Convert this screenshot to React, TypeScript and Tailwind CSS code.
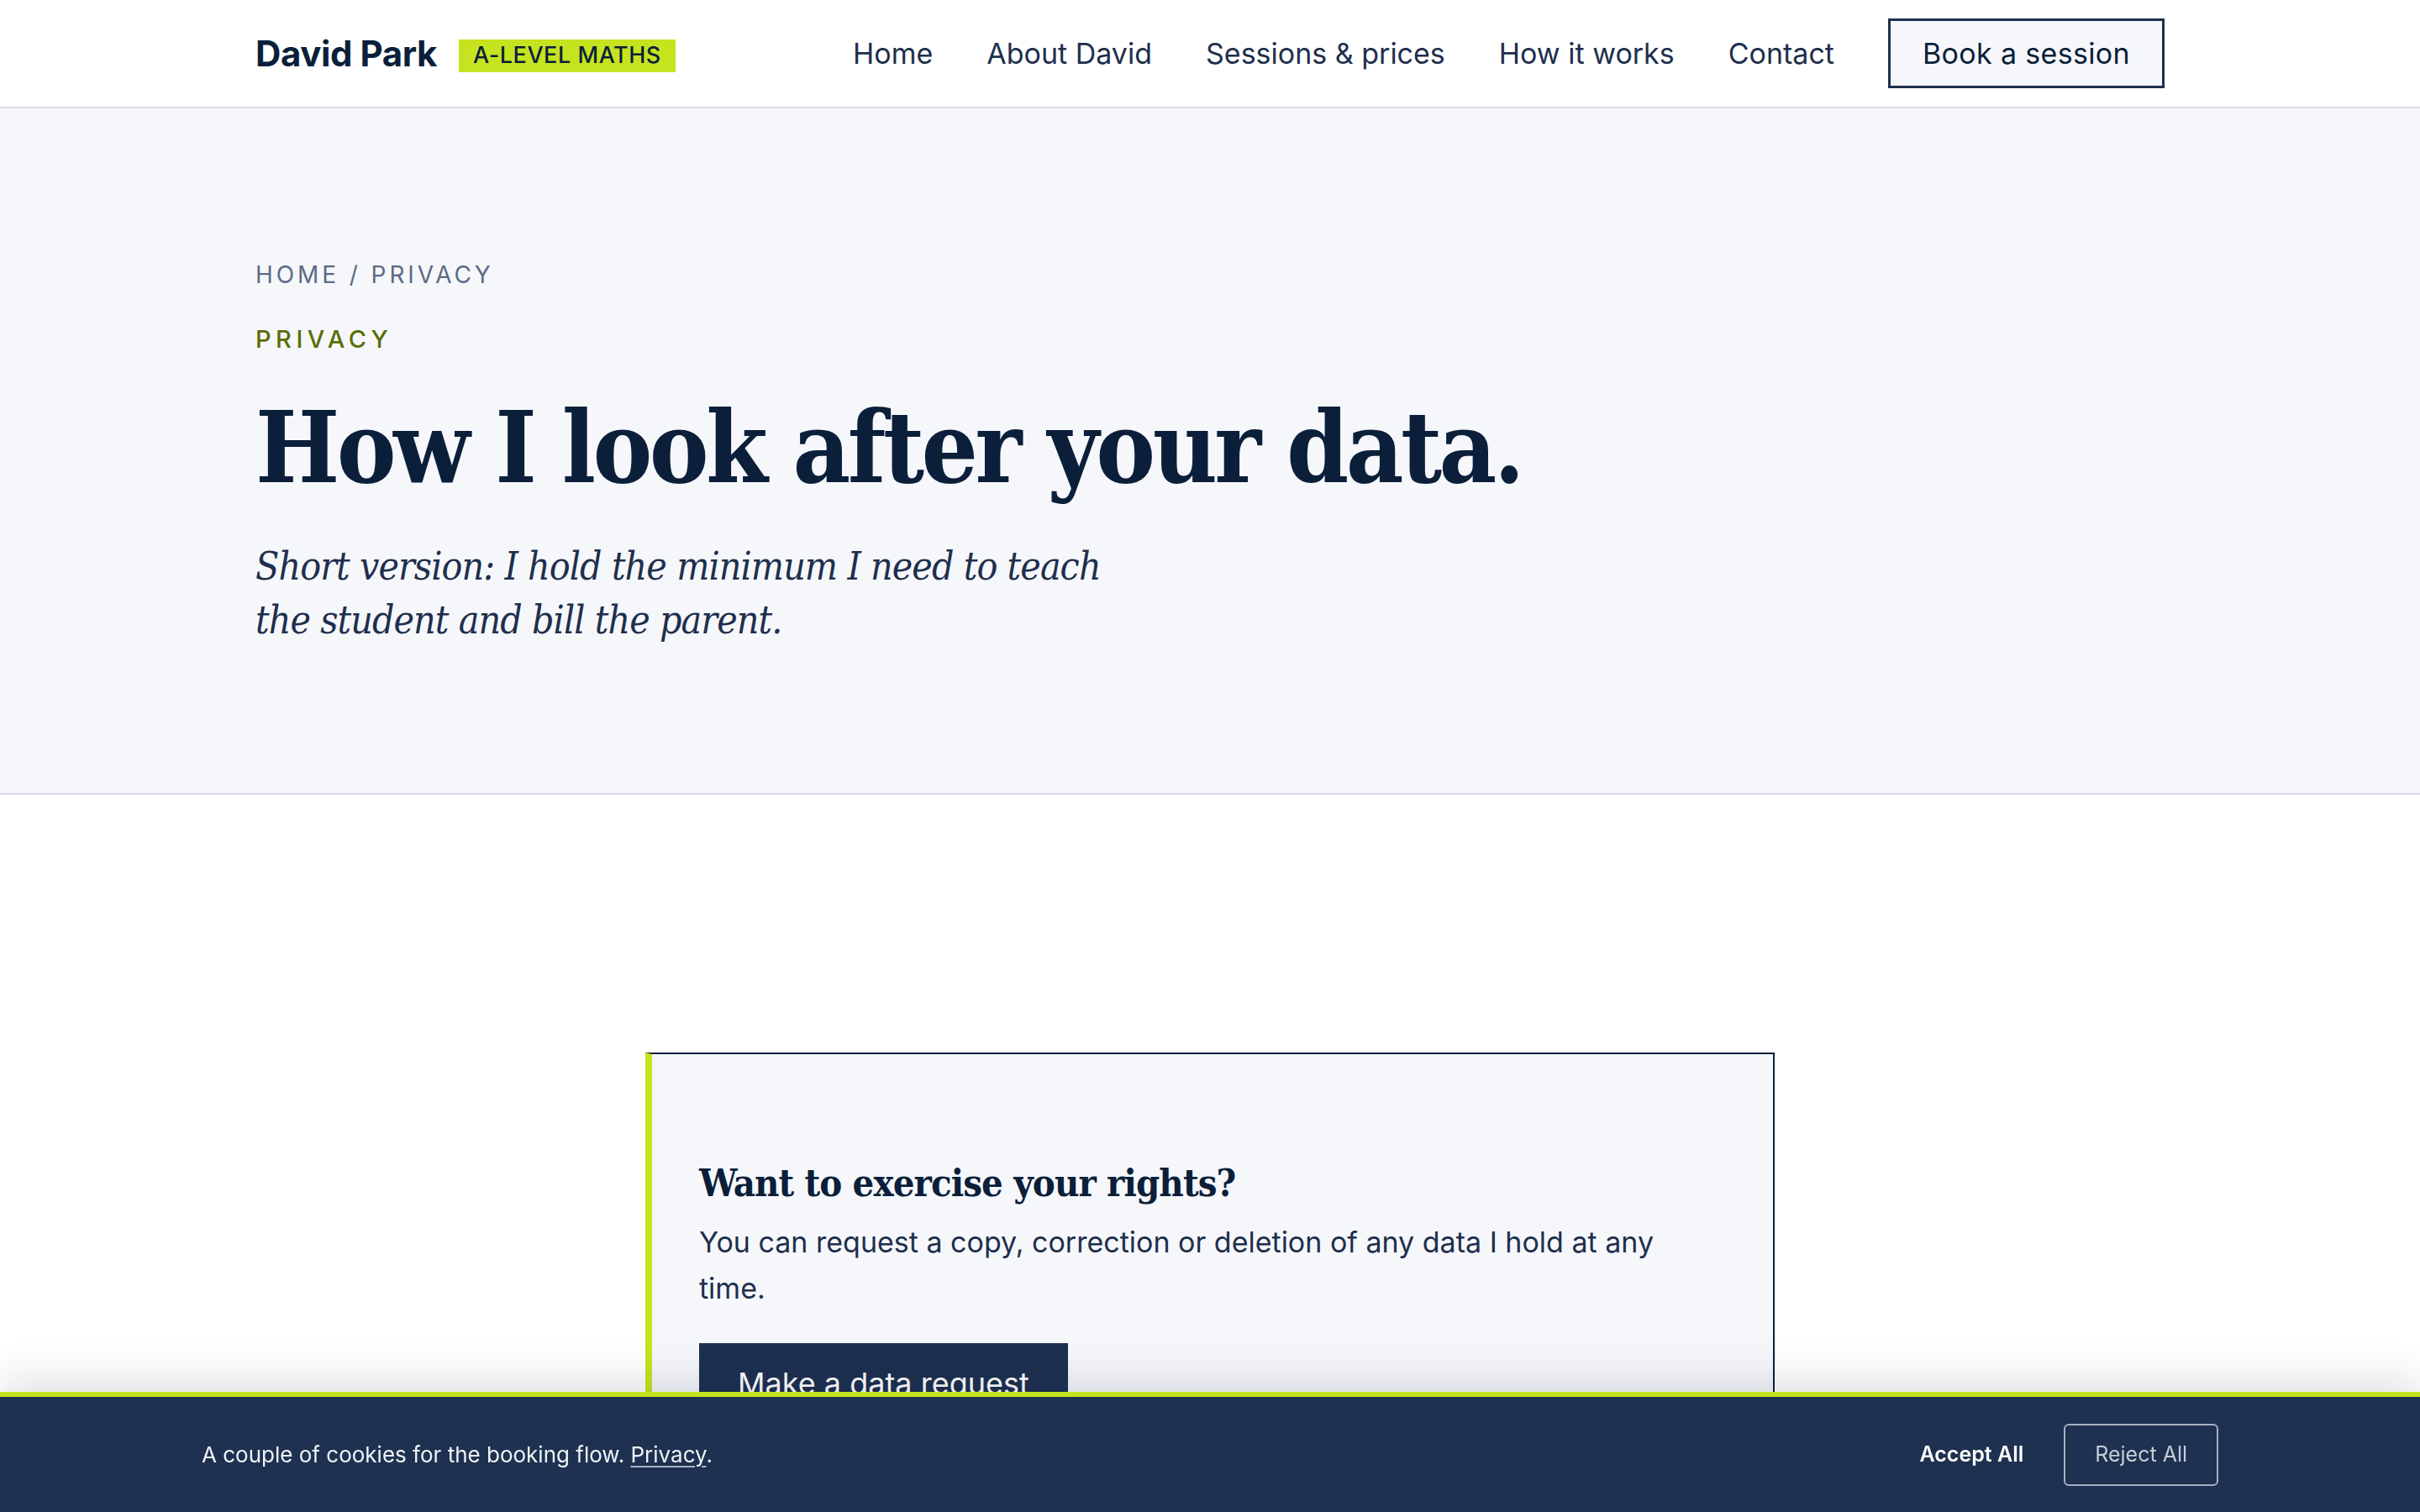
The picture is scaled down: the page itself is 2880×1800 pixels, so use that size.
const sans = "font-['Inter','Liberation_Sans',sans-serif]";
const serif = "font-['DejaVu_Serif_Condensed','DejaVu_Serif','Liberation_Serif',serif]";

const navLinks = ["Home", "About David", "Sessions & prices", "How it works", "Contact"];

function Header() {
  return (
    <header className="h-[129px] bg-white border-b-2 border-[#d9dde0]">
      <div className="max-w-[2272px] mx-auto h-full flex items-center justify-between">
        <div className="flex items-center gap-[26px]">
          <span className="text-[42px] font-bold tracking-[-0.01em] text-[#0b1f3a]">David Park</span>
          <span className="mt-[6px] bg-[#c6e31f] px-[17px] h-[39px] flex items-center text-[27px] font-medium tracking-[0.02em] text-[#0b1f3a]">
            A-LEVEL MATHS
          </span>
        </div>
        <nav className="flex items-center gap-16">
          {navLinks.map((l) => (
            <a key={l} className="text-[34px] text-[#1e2f4d]">
              {l}
            </a>
          ))}
          <a className="h-[83px] px-[38px] flex items-center border-[3px] border-[#1e2f4d] bg-[#f6f7fb] text-[34px] tracking-[0.01em] text-[#0b1f3a]">
            Book a session
          </a>
        </nav>
      </div>
    </header>
  );
}

function Hero() {
  return (
    <section className="bg-[#f6f7fb] border-b-2 border-[#d5d8df] pt-[178px] pb-[174px]">
      <div className="max-w-[2272px] mx-auto">
        <div className="text-[28px] leading-10 tracking-[0.14em] text-[#5a6b85]">HOME / PRIVACY</div>
        <div className="mt-[37px] text-[29px] leading-10 font-medium tracking-[0.19em] text-[#5a6e0a]">PRIVACY</div>
        <h1 className={`${serif} mt-[39px] text-[118px] leading-[140px] font-bold tracking-[-0.03em] text-[#0b1f3a]`}>
          How I look after your data.
        </h1>
        <p className={`${serif} mt-[39px] max-w-[1040px] text-[46px] leading-[64px] italic tracking-[-0.02em] text-[#1e2f4d]`}>
          Short version: I hold the minimum I need to teach the student and bill the parent.
        </p>
      </div>
    </section>
  );
}

function RightsCard() {
  return (
    <section className="bg-white pt-[307px] pb-48">
      <div className="max-w-[1344px] mx-auto border-2 border-[#0b1f3a] border-l-8 border-l-[#c6e31f] bg-[#f6f7fb] pl-14 pr-16 pt-[122px] pb-20">
        <h2 className={`${serif} text-[45px] leading-[64px] font-bold tracking-[-0.02em] text-[#0b1f3a]`}>
          Want to exercise your rights?
        </h2>
        <p className="mt-2.5 text-[34px] leading-[55px] text-[#1e2f4d]">
          You can request a copy, correction or deletion of any data I hold at any time.
        </p>
        <button className="mt-[38px] h-24 px-[46px] bg-[#1e3050] text-white text-[36px] leading-[56px]">
          Make a data request
        </button>
      </div>
    </section>
  );
}

function CookieBanner() {
  return (
    <div className="fixed bottom-0 inset-x-0 h-[143px] bg-[#1e3150] border-t-[6px] border-[#c6e31f] shadow-[0_-18px_48px_rgba(15,30,60,0.12)]">
      <div className="max-w-[2400px] mx-auto h-full flex items-center justify-between">
        <p className="text-[26px] text-[#eef1f6]">
          A couple of cookies for the booking flow.{" "}
          <a className="underline underline-offset-4 decoration-2 decoration-[#aab3c3]">Privacy</a>.
        </p>
        <div className="flex items-center gap-[48px]">
          <button className="text-[25px] font-semibold text-white">Accept All</button>
          <button className="h-[74px] px-[35px] rounded-[6px] border-2 border-[#a7b0c0] text-[25px] text-[#c5ccd8]">
            Reject All
          </button>
        </div>
      </div>
    </div>
  );
}

export default function App() {
  return (
    <div className={`${sans} min-h-screen bg-white`}>
      <Header />
      <Hero />
      <RightsCard />
      <CookieBanner />
    </div>
  );
}
